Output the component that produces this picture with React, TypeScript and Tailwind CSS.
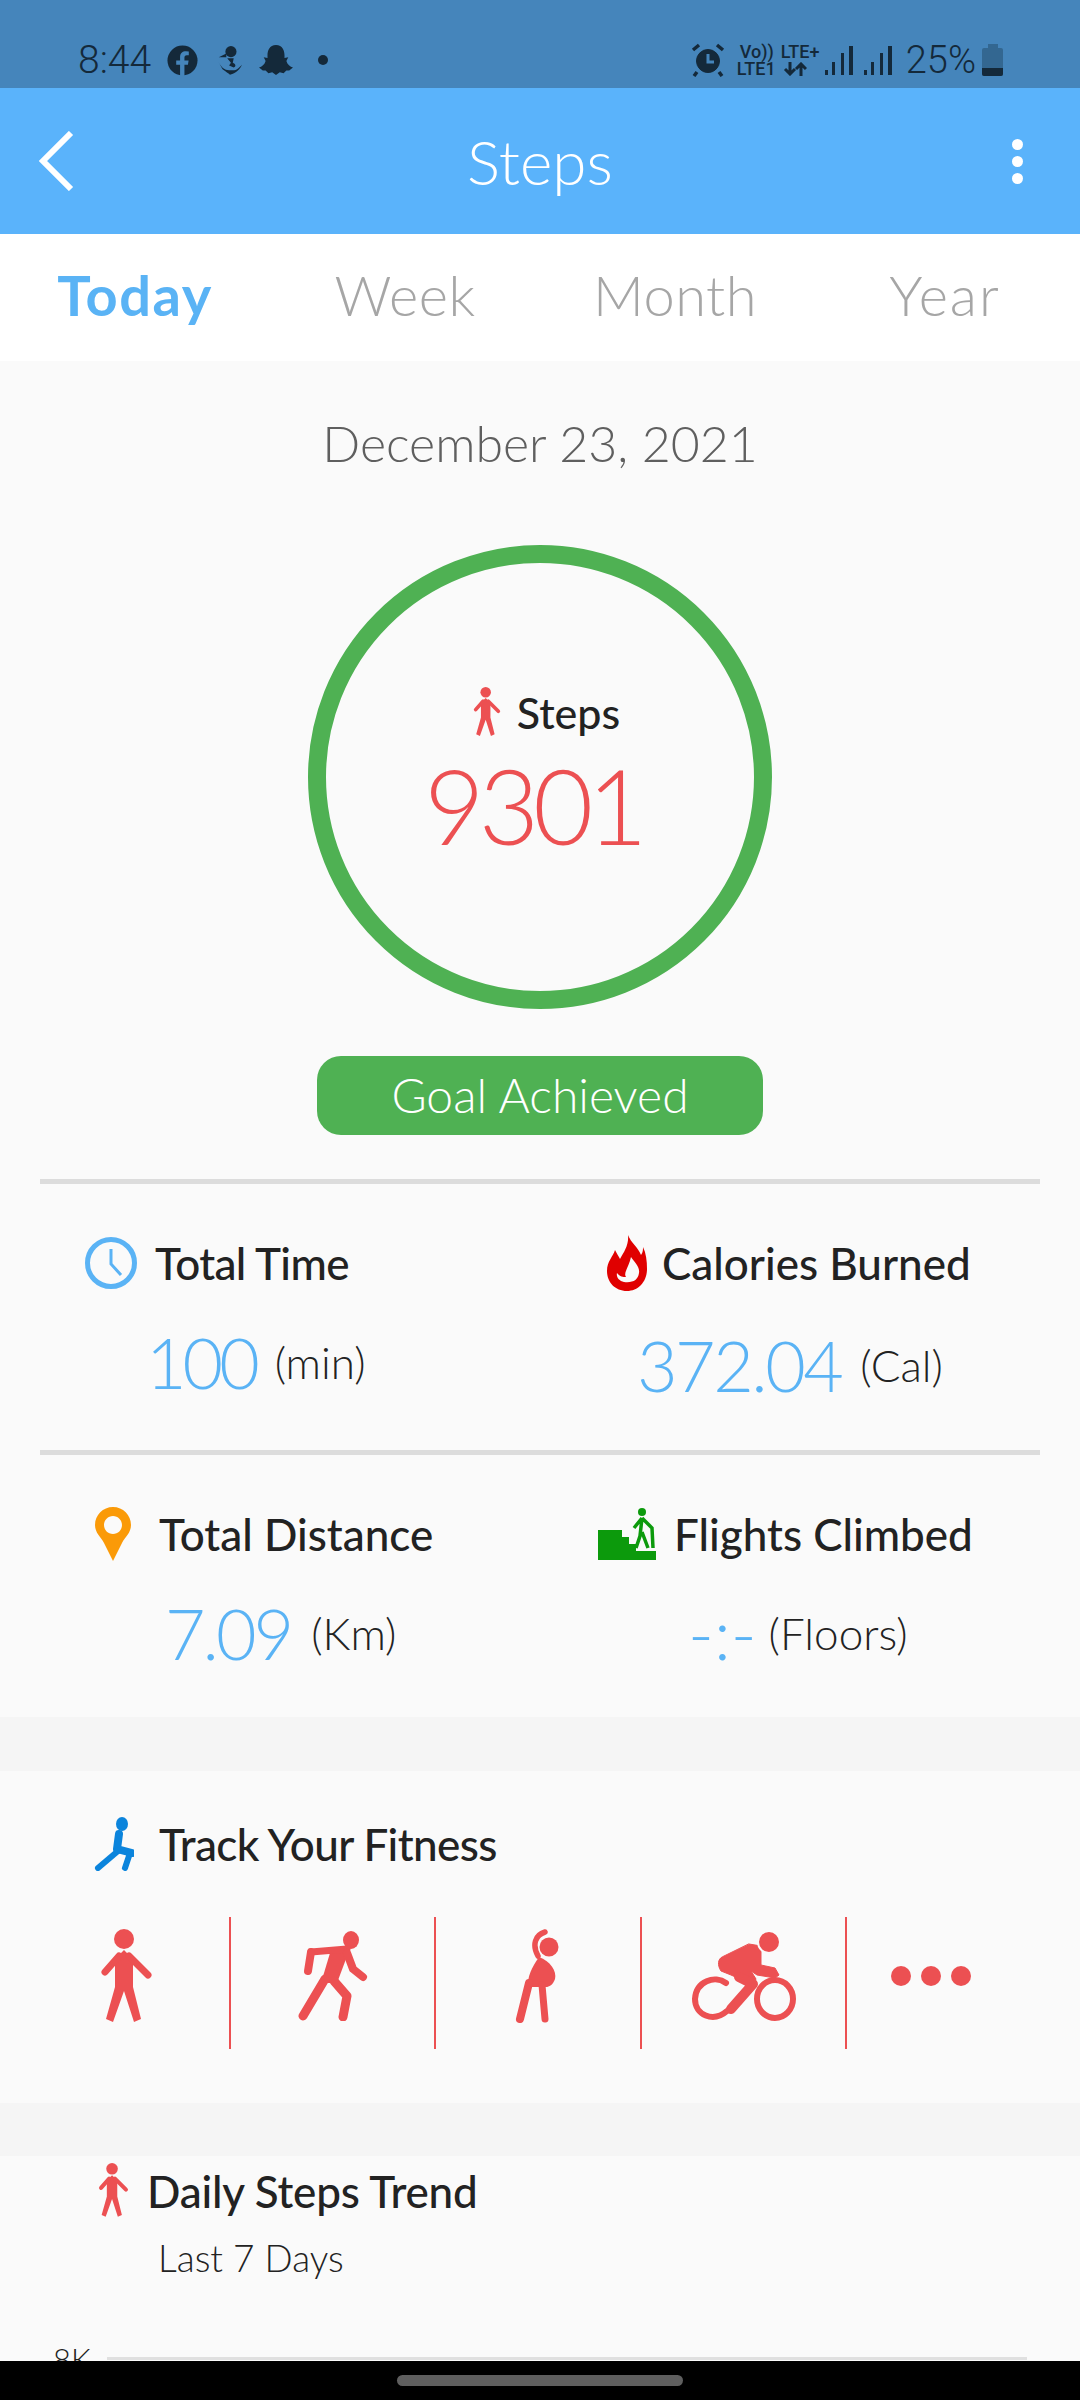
import type { ReactNode } from "react";

const RED = "#EC5052";

function Person({ className }: { className: string }) {
  return (
    <svg viewBox="0 0 53 95" className={className} fill={RED}>
      <circle cx="24" cy="10" r="10" />
      <path d="M24 21 L33 30 L33 58 L41 90 L34 93 L24 62 L13 93 L6 90 L15 58 L15 30 Z" />
      <path d="M19 27 L5 43" stroke={RED} strokeWidth="7" strokeLinecap="round" />
      <path d="M29 27 L48 46" stroke={RED} strokeWidth="7" strokeLinecap="round" />
    </svg>
  );
}

function Runner() {
  return (
    <svg viewBox="0 0 71 90" className="w-[71px] h-[90px]" fill="none" stroke={RED} strokeLinecap="round" strokeLinejoin="round">
      <ellipse cx="54" cy="9" rx="8" ry="9" fill={RED} stroke="none" />
      <path d="M33 22 L52 20 L40 52 L24 52 Z" fill={RED} stroke="none" />
      <path d="M14 21 L50 18" strokeWidth="7" />
      <path d="M14 21 L11 40" strokeWidth="8" />
      <path d="M28 48 L6 85" strokeWidth="9" />
      <path d="M37 50 L50 65 L46 86" strokeWidth="9" />
      <path d="M50 22 L56 38 L66 46" strokeWidth="8" />
    </svg>
  );
}

function Stretch() {
  return (
    <svg viewBox="0 0 47 94" className="w-[47px] h-[94px]" fill="none" stroke={RED} strokeLinecap="round" strokeLinejoin="round">
      <circle cx="35" cy="18" r="9.5" fill={RED} stroke="none" />
      <path d="M31 3 C21 6 18 16 24 27" strokeWidth="5.5" />
      <path d="M25 28 C36 32 43 42 41 50 C39 56 35 58 32 58 L14 58 C13 48 18 38 25 28 Z" fill={RED} stroke="none" />
      <path d="M15 54 L6 90" strokeWidth="8" />
      <path d="M28 56 L31 90" strokeWidth="7" />
    </svg>
  );
}

function Bike() {
  return (
    <svg viewBox="0 0 105 90" className="w-[105px] h-[90px]" fill="none" stroke={RED} strokeLinecap="round" strokeLinejoin="round">
      <path d="M58 13 L70 15 L70 34 L84 37 L88 44 L84 47 L66 44 L60 40 L65 48 L62 54 L40 44 L30 40 C26 34 27 28 31 26 Z" fill={RED} />
      <ellipse cx="78" cy="11" rx="11" ry="11" fill={RED} stroke="#FAFAFA" strokeWidth="2" />
      <path d="M48 46 L62 53 L40 78" strokeWidth="10" />
      <path d="M35 52 C24 44 5 50 4 68 C4 84 22 92 36 80" strokeWidth="6" />
      <ellipse cx="84" cy="68" rx="18" ry="19" strokeWidth="6" />
    </svg>
  );
}

function Signal() {
  return (
    <svg viewBox="0 0 28 29" className="w-[28px] h-[29px]" fill="#14293A">
      <rect x="0" y="24" width="3" height="5" />
      <rect x="7" y="16" width="3" height="13" />
      <rect x="16" y="7" width="3" height="22" />
      <rect x="24" y="0" width="4" height="29" />
    </svg>
  );
}

function StatTitle({ icon, label, pl, gap, tracking = "" }: { icon: ReactNode; label: string; pl: string; gap: string; tracking?: string }) {
  return (
    <div className={`flex items-center h-[54px] ${pl} ${gap}`}>
      {icon}
      <span className={`text-[44px] leading-none font-medium text-[#222222] whitespace-nowrap ${tracking}`}>{label}</span>
    </div>
  );
}

function StatValue({ value, unit, pl, gap, tracking }: { value: string; unit: string; pl: string; gap: string; tracking: string }) {
  return (
    <div className={`flex items-center h-[70px] ${pl} ${gap}`}>
      <span className={`text-[70px] leading-none font-light text-[#5AB3F5] ${tracking}`}>{value}</span>
      <span className="text-[44px] leading-none font-light text-[#222222]">{unit}</span>
    </div>
  );
}

export default function App() {
  return (
    <div className="w-[1080px] h-[2400px] overflow-hidden flex flex-col bg-black font-['Lato',sans-serif]">
      {/* status bar */}
      <div className="h-[88px] shrink-0 bg-[#4585BB] flex items-start justify-between pt-[42px] pl-[78px] pr-[77px] text-[#14293A]">
        <div className="flex items-center h-[36px]">
          <span className="text-[39px] leading-none font-['Roboto',sans-serif] font-light">8:44</span>
          <svg viewBox="0 0 32 32" className="w-[31px] h-[31px] ml-[16px]">
            <circle cx="16" cy="16" r="15.5" fill="#14293A" />
            <path d="M13.5 32 V20.5 H9.5 V16 H13.5 V12.5 C13.5 8.5 16 6.5 19.5 6.5 L22.5 6.8 V10.6 H20.4 C18.6 10.6 18 11.7 18 13 V16 H22.3 L21.6 20.5 H18 V32 Z" fill="#4585BB" />
          </svg>
          <svg viewBox="0 0 28 32" className="w-[26px] h-[30px] ml-[19px]" fill="#14293A">
            <circle cx="15" cy="7" r="6" />
            <path d="M10 9 L2 13 L10 13 Z" />
            <path d="M11 14 H18 L17 19 C20 20 21 23 18 24 L13 22 L15 19 Z" />
            <path d="M2 19 L6 26 C10 29 12 30 14 32 C18 30 23 29 27 21 L23 25 C20 28 16 27 13 27 C8 27 5 24 2 19 Z" />
          </svg>
          <svg viewBox="0 0 36 32" className="w-[34px] h-[32px] ml-[16px]" fill="#14293A">
            <path d="M18 0 C25 0 27 6 27 11 L27 14 L31 13 L29 17 C30 21 33 23 36 24 L32 27 L29 27 L26 30 L22 29 L18 32 L14 29 L10 30 L7 27 L4 27 L0 24 C3 23 6 21 7 17 L5 13 L9 14 L9 11 C9 6 11 0 18 0 Z" />
          </svg>
          <div className="w-[10px] h-[10px] ml-[25px] rounded-full bg-[#14293A]" />
        </div>
        <div className="flex items-center h-[36px]">
          <svg viewBox="0 0 34 34" className="w-[34px] h-[34px]" fill="none" stroke="#14293A">
            <circle cx="17" cy="18" r="11.5" fill="#14293A" />
            <path d="M17 11 V19 H23" stroke="#4585BB" strokeWidth="3" />
            <path d="M2 7 L8 2 M32 7 L26 2 M6 29 L3 33 M28 29 L31 33" strokeWidth="3.5" />
          </svg>
          <div className="ml-[12px] w-[82px] flex flex-col text-[18px] leading-[17px] font-['Roboto',sans-serif] font-medium">
            <div className="flex gap-[7px] pl-[3px]"><span>Vo))</span><span>LTE+</span></div>
            <div className="flex gap-[7px] items-center">
              <span>LTE1</span>
              <svg viewBox="0 0 24 14" className="w-[24px] h-[14px]" fill="none" stroke="#14293A" strokeWidth="3">
                <path d="M7 0 V12 M2 7 L7 12 L12 7" />
                <path d="M18 14 V2 M13 7 L18 2 L23 7" />
              </svg>
            </div>
          </div>
          <div className="ml-[6px] flex gap-[11px]">
            <Signal />
            <Signal />
          </div>
          <span className="text-[38px] leading-none font-['Roboto',sans-serif] font-light ml-[14px]">25%</span>
          <div className="ml-[6px] w-[21px] h-[32px] flex flex-col items-center">
            <div className="w-[10px] h-[4px] bg-[#336791]" />
            <div className="w-[21px] h-[28px] rounded-[2px] bg-[#336791] flex flex-col justify-end overflow-hidden">
              <div className="h-[8px] bg-[#14293A]" />
            </div>
          </div>
        </div>
      </div>

      {/* app bar */}
      <div className="h-[146px] shrink-0 bg-[#5AB3FB] flex items-center justify-between pl-[38px] pr-[57px] relative">
        <svg viewBox="0 0 36 60" className="w-[36px] h-[60px]" fill="none" stroke="#FFFFFF" strokeWidth="6">
          <path d="M33 2 L5 30 L33 58" />
        </svg>
        <span className="absolute left-0 right-0 text-center text-[62px] leading-none font-light text-white">Steps</span>
        <div className="flex flex-col gap-[6px]">
          <div className="w-[11px] h-[11px] rounded-full bg-white" />
          <div className="w-[11px] h-[11px] rounded-full bg-white" />
          <div className="w-[11px] h-[11px] rounded-full bg-white" />
        </div>
      </div>

      {/* tabs */}
      <div className="h-[127px] shrink-0 bg-white grid grid-cols-4 items-center text-center text-[56px] leading-none font-light tracking-[0.5px] text-[#A6A6A6] pb-[6px]">
        <span className="font-bold tracking-[1.5px] text-[#5AB3F5]">Today</span>
        <span>Week</span>
        <span>Month</span>
        <span className="tracking-[2px]">Year</span>
      </div>

      {/* today summary */}
      <div className="h-[1356px] shrink-0 bg-[#FAFAFA] flex flex-col">
        <div className="pt-[54px] h-[112px] text-center text-[50px] leading-[56px] font-light text-[#5F5F5F]">December 23, 2021</div>
        <div className="mt-[72px] self-center w-[464px] h-[464px] rounded-full border-[18px] border-[#4FB153] flex flex-col items-center">
          <div className="mt-[124px] flex items-center gap-[15px] pl-[12px]">
            <Person className="w-[30px] h-[50px]" />
            <span className="text-[43px] leading-none font-medium text-[#222222]">Steps</span>
          </div>
          <div className="mt-[16px] pr-[14px] text-[104px] leading-none font-light tracking-[-6px] text-[#EC5052]">9301</div>
        </div>
        <div className="mt-[47px] self-center w-[446px] h-[79px] rounded-[24px] bg-[#4FB153] flex items-center justify-center pb-[2px] text-[48px] leading-none font-light text-white">
          Goal Achieved
        </div>
        <div className="mt-[44px] mx-[40px] h-[5px] shrink-0 bg-[#DCDCDC]" />
        <div className="h-[266px] shrink-0 grid grid-cols-2 pt-[52px]">
          <div className="flex flex-col gap-[37px]">
            <StatTitle
              pl="pl-[85px]"
              gap="gap-[18px]"
              tracking="tracking-[-0.6px]"
              label="Total Time"
              icon={
                <svg viewBox="0 0 52 52" className="w-[52px] h-[52px]" fill="none" stroke="#5AB3F5">
                  <circle cx="26" cy="26" r="23.5" strokeWidth="5" />
                  <path d="M26 12 V27 L36 38" strokeWidth="3" />
                </svg>
              }
            />
            <StatValue pl="pl-[146px]" gap="gap-[19px]" tracking="tracking-[-4px]" value="100" unit="(min)" />
          </div>
          <div className="flex flex-col gap-[37px]">
            <StatTitle
              pl="pl-[67px]"
              gap="gap-[15px]"
              label="Calories Burned"
              icon={
                <svg viewBox="0 0 40 56" className="w-[40px] h-[56px]">
                  <path d="M21 0 C24 8 31 12 34 20 C36 17 36 15 36 12 C39 18 40 26 40 34 C40 47 31 56 20 56 C8 56 0 47 0 36 C0 26 6 22 8 15 C10 19 12 22 13 24 C17 17 22 10 21 0 Z" fill="#E00000" />
                  <path d="M24 22 C28 28 33 32 32 38 C31 45 26 48 17 47 C12 46 9 42 10 38 C13 42 16 42 19 42 C16 38 22 32 24 22 Z" fill="#FAFAFA" />
                </svg>
              }
            />
            <div className="mt-[3px]">
              <StatValue pl="pl-[97px]" gap="gap-[19px]" tracking="tracking-[-2.5px]" value="372.04" unit="(Cal)" />
            </div>
          </div>
        </div>
        <div className="mx-[40px] h-[5px] shrink-0 bg-[#DCDCDC]" />
        <div className="grid grid-cols-2 pt-[52px]">
          <div className="flex flex-col gap-[37px]">
            <StatTitle
              pl="pl-[95px]"
              gap="gap-[28px]"
              label="Total Distance"
              icon={
                <svg viewBox="0 0 36 54" className="w-[36px] h-[54px]">
                  <path fillRule="evenodd" d="M18 0 C28 0 36 8 36 18 C36 26 30 30 27 36 L18 54 L9 36 C6 30 0 26 0 18 C0 8 8 0 18 0 Z M18 9 C13 9 9 13 9 18 C9 23 13 27 18 27 C23 27 27 23 27 18 C27 13 23 9 18 9 Z" fill="#FA9A08" />
                </svg>
              }
            />
            <StatValue pl="pl-[165px]" gap="gap-[20px]" tracking="tracking-[-3px]" value="7.09" unit="(Km)" />
          </div>
          <div className="flex flex-col gap-[37px]">
            <StatTitle
              pl="pl-[58px]"
              gap="gap-[18px]"
              label="Flights Climbed"
              icon={
                <svg viewBox="0 0 58 52" className="w-[58px] h-[52px]">
                  <path d="M0 22 H24 V29 H31 V36 H38 V43 H58 V52 H0 Z" fill="#0C9A0C" />
                  <circle cx="44" cy="4" r="4" fill="#0C9A0C" />
                  <path d="M44 10 L36 20 M44 10 L54 20 L55 40 M44 10 L42 28 L38 40 M44 24 L50 40" stroke="#0C9A0C" strokeWidth="3.5" fill="none" />
                </svg>
              }
            />
            <StatValue pl="pl-[148px]" gap="gap-[12px]" tracking="tracking-[0px]" value="-:-" unit="(Floors)" />
          </div>
        </div>
      </div>

      <div className="h-[54px] shrink-0 bg-[#F5F5F5]" />

      {/* track your fitness */}
      <div className="h-[332px] shrink-0 bg-[#FAFAFA] pt-[46px]">
        <div className="flex items-center h-[54px] pl-[94px] gap-[25px]">
          <svg viewBox="0 0 40 54" className="w-[40px] h-[54px]" fill="none" stroke="#0B84DC" strokeLinecap="round" strokeLinejoin="round">
            <ellipse cx="28" cy="7" rx="6" ry="7" fill="#0B84DC" stroke="none" />
            <path d="M25 17 L23 32 L38 36" strokeWidth="8" />
            <path d="M24 34 L4 51" strokeWidth="6" />
            <path d="M36 36 L31 51" strokeWidth="6" />
          </svg>
          <span className="text-[44px] leading-none font-medium tracking-[-0.6px] text-[#222222]">Track Your Fitness</span>
        </div>
        <div className="mt-[46px] h-[132px] pl-[25px] flex">
          <div className="w-[205.5px] h-full border-r-2 border-[#EC5052] flex items-center justify-center pb-[14px]">
            <Person className="w-[53px] h-[95px]" />
          </div>
          <div className="w-[205.5px] h-full border-r-2 border-[#EC5052] flex items-center justify-center pb-[14px]">
            <Runner />
          </div>
          <div className="w-[205.5px] h-full border-r-2 border-[#EC5052] flex items-center justify-center pb-[14px]">
            <Stretch />
          </div>
          <div className="w-[205.5px] h-full border-r-2 border-[#EC5052] flex items-center justify-center pb-[14px]">
            <Bike />
          </div>
          <div className="pl-[44px] h-full flex items-center gap-[10px] pb-[14px]">
            <div className="w-[20px] h-[20px] rounded-full bg-[#EC5052]" />
            <div className="w-[20px] h-[20px] rounded-full bg-[#EC5052]" />
            <div className="w-[20px] h-[20px] rounded-full bg-[#EC5052]" />
          </div>
        </div>
      </div>

      <div className="h-[53px] shrink-0 bg-[#F5F5F5]" />

      {/* daily steps trend */}
      <div className="h-[205px] shrink-0 bg-[#FAFAFA] overflow-hidden pt-[7px]">
        <div className="flex items-center h-[55px] pl-[98px] gap-[18px]">
          <Person className="w-[31px] h-[55px]" />
          <span className="text-[44px] leading-none font-medium tracking-[-0.2px] text-[#222222]">Daily Steps Trend</span>
        </div>
        <div className="mt-[20px] pl-[158px] text-[37px] leading-[40px] font-light text-[#222222]">Last 7 Days</div>
        <div className="mt-[61px] pl-[53px] flex items-start">
          <span className="w-[54px] text-[31px] leading-[40px] font-light text-[#222222]">8K</span>
          <div className="w-[920px] h-[3px] mt-[18px] bg-[#E0E0E0]" />
        </div>
      </div>

      {/* nav bar */}
      <div className="flex-1 bg-black flex justify-center pt-[14px]">
        <div className="w-[286px] h-[11px] rounded-full bg-[#5F5F5F]" />
      </div>
    </div>
  );
}
